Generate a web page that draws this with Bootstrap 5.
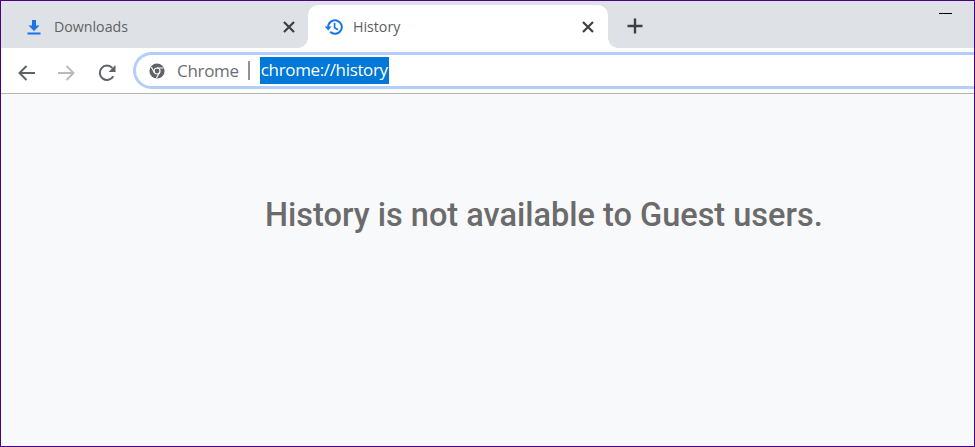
<!DOCTYPE html>
<html lang="en">
<head>
<meta charset="utf-8">
<title>History</title>
<link rel="stylesheet" href="https://cdn.jsdelivr.net/npm/bootstrap@5.3.0/dist/css/bootstrap.min.css">
<style>
html,body{height:100%;margin:0;overflow:hidden}
body{font-family:"Open Sans","Noto Sans",sans-serif;background:#f8f9fb}
.frame{height:447px;border:1px solid #4b0082;background:#f8f9fb}
.strip{height:47px;background:#dee1e6;padding-top:4px;position:relative}
.tabitem{width:307px;height:43px;padding:0 12px 0 24px;font-size:14.2px;color:#5f6368}
.tabitem.second{width:300px;padding:0 13px 0 17px;background:#fff;border-radius:10px 10px 0 0;position:relative;color:#5a5e63}
.tabitem.second::before,.tabitem.second::after{content:"";position:absolute;bottom:0;width:10px;height:10px}
.tabitem.second::before{left:-10px;background:radial-gradient(circle at 0 0,#dee1e6 9.5px,#fff 10px)}
.tabitem.second::after{right:-10px;background:radial-gradient(circle at 100% 0,#dee1e6 9.5px,#fff 10px)}
.tabicon{width:18px;height:18px;flex:none;margin-right:11px}
.second .tabicon{margin-right:10px}
.tabname{flex:1 1 auto;padding-top:1px}
.tabclose{width:14px;height:14px;flex:none}
.plus{width:18px;height:18px;margin-left:18px;margin-top:-1px;flex:none}
.winmin{position:absolute;top:12px;right:22px;width:13px;height:1px;background:#000}
.tools{height:46px;background:#fff;border-bottom:1px solid #b4b4b4;padding-top:4px}
.navbtns{width:132px;padding-left:16px;gap:22.5px;flex:none}
.navbtns svg{width:18px;height:18px;flex:none}
.omni{flex:1 1 auto;height:37px;border:3px solid #b3cefb;border-right:0;border-radius:19px 0 0 19px;padding-left:13px;font-size:17px;color:#6a6e73}
.omni svg{width:16px;height:16px;flex:none;margin-right:12px}
.origin{letter-spacing:-.3px}
.pipe{width:2px;height:19px;background:#8f9296;margin:0 10px 0 9px;flex:none}
.urlsel{background:#0078d7;color:#fff;height:27px;line-height:26px;padding:0 1px;letter-spacing:-.35px}
.notice{padding:102px 0 0 264px;margin:0;font-family:Roboto,sans-serif;font-weight:500;font-size:32.5px;line-height:38px;color:#6b6b6b;white-space:nowrap}
</style>
</head>
<body>
<div class="frame d-flex flex-column">
  <div class="strip d-flex">
    <div class="tabitem d-flex align-items-center">
      <svg class="tabicon" viewBox="0 0 18 18"><path fill="#1a73e8" d="M14.5 7.5H11V2H7v5.500H3.500L9 13z"/><rect x="2.500" y="14.500" width="13" height="2" fill="#1a73e8"/></svg>
      <span class="tabname">Downloads</span>
      <svg class="tabclose" viewBox="0 0 14 14"><path d="M2 2l10 10M12 2L2 12" stroke="#3c4043" stroke-width="2.200" fill="none"/></svg>
    </div>
    <div class="tabitem second d-flex align-items-center">
      <svg class="tabicon" viewBox="0 0 18 18" fill="none" stroke="#1a73e8"><path stroke-width="2" d="M3.200 9A6.800 6.800 0 1 1 5.200 13.800"/><path fill="#1a73e8" stroke="none" d="M-.2 8.400h6.800L3.200 12.400z"/><path stroke-width="1.700" d="M9.600 5v4.700l3.400 2"/></svg>
      <span class="tabname">History</span>
      <svg class="tabclose" viewBox="0 0 14 14"><path d="M2 2l10 10M12 2L2 12" stroke="#3c4043" stroke-width="2.200" fill="none"/></svg>
    </div>
    <svg class="plus align-self-center" viewBox="0 0 18 18"><path d="M9 1.500v15M1.500 9h15" stroke="#3c4043" stroke-width="2.400" fill="none"/></svg>
    <div class="winmin"></div>
  </div>
  <div class="tools d-flex">
    <div class="navbtns d-flex align-items-center">
      <svg viewBox="0 0 18 18"><path d="M18 9H2.500M9.500 2l-7 7 7 7" stroke="#5f6368" stroke-width="2" fill="none"/></svg>
      <svg viewBox="0 0 18 18"><path d="M0 9h15.500M8.500 2l7 7-7 7" stroke="#b9bbbe" stroke-width="2" fill="none"/></svg>
      <svg viewBox="0 0 18 18"><path d="M15.300 12.300A7.200 7.200 0 1 1 14.300 3.900" stroke="#5f6368" stroke-width="2" fill="none"/><path d="M17.500 1v7h-7z" fill="#5f6368"/></svg>
    </div>
    <div class="omni d-flex align-items-center">
      <svg viewBox="0 0 16 16"><circle cx="8" cy="8" r="7.600" fill="#5f6368"/><circle cx="8" cy="8" r="3" fill="#5f6368" stroke="#fff" stroke-width="1.200"/><path d="M8 5h6.400M5.400 9.500L2.300 4M10.600 9.500l-3.200 5.600" stroke="#fff" stroke-width="1.100" fill="none"/></svg>
      <span class="origin">Chrome</span>
      <span class="pipe"></span>
      <span class="urlsel">chrome://history</span>
    </div>
  </div>
  <h1 class="notice">History is not available to Guest users.</h1>
</div>
<script src="https://cdn.jsdelivr.net/npm/bootstrap@5.3.0/dist/js/bootstrap.bundle.min.js"></script>
</body>
</html>
